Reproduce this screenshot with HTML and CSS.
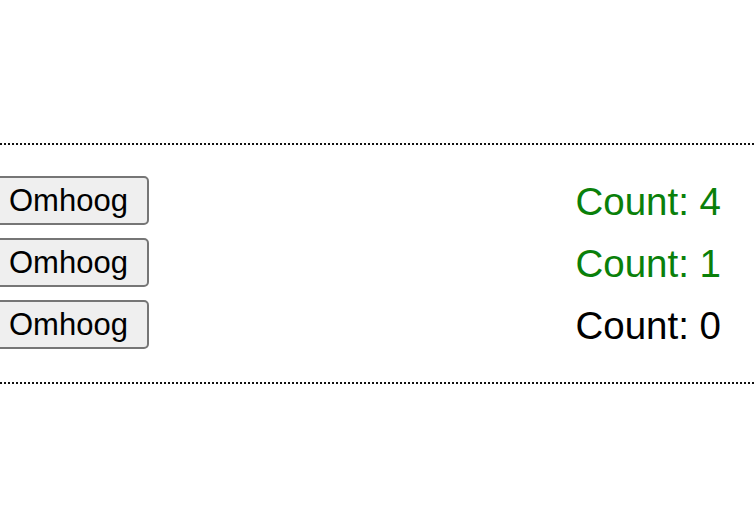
FILE: index.html
```html
<!DOCTYPE html>
<html>
<head>
<meta charset="utf-8">
<link rel="stylesheet" href="styles.css">
</head>
<body>
<div class="panel">
  <div class="row">
    <button class="up">Omhoog</button>
    <span class="count active">Count: 4</span>
  </div>
  <div class="row">
    <button class="up">Omhoog</button>
    <span class="count active">Count: 1</span>
  </div>
  <div class="row">
    <button class="up">Omhoog</button>
    <span class="count">Count: 0</span>
  </div>
</div>
</body>
</html>
```
FILE: styles.css
```css
html, body {
  margin: 0;
  padding: 0;
  background: #fff;
}
body {
  font-family: "Liberation Sans", Arial, sans-serif;
  padding-top: 143px;
}
.panel {
  border-top: 2px dotted #111;
  border-bottom: 2px dotted #111;
  padding: 31px 33px 33px 0;
  display: flex;
  flex-direction: column;
  gap: 13px;
}
.row {
  display: flex;
  justify-content: space-between;
  align-items: center;
  height: 49px;
}
.up {
  margin-left: -10px;
  font-family: "Liberation Sans", Arial, sans-serif;
  font-size: 31px;
  line-height: 36px;
  height: 49px;
  padding: 4px 19px 4px 17px;
  color: #000;
  background: #efefef;
  border: 2px solid #767676;
  border-radius: 5px;
}
.count {
  font-size: 38.5px;
  color: #000;
  line-height: 44px;
  padding-top: 2px;
}
.count.active {
  color: #0a800a;
}
```
